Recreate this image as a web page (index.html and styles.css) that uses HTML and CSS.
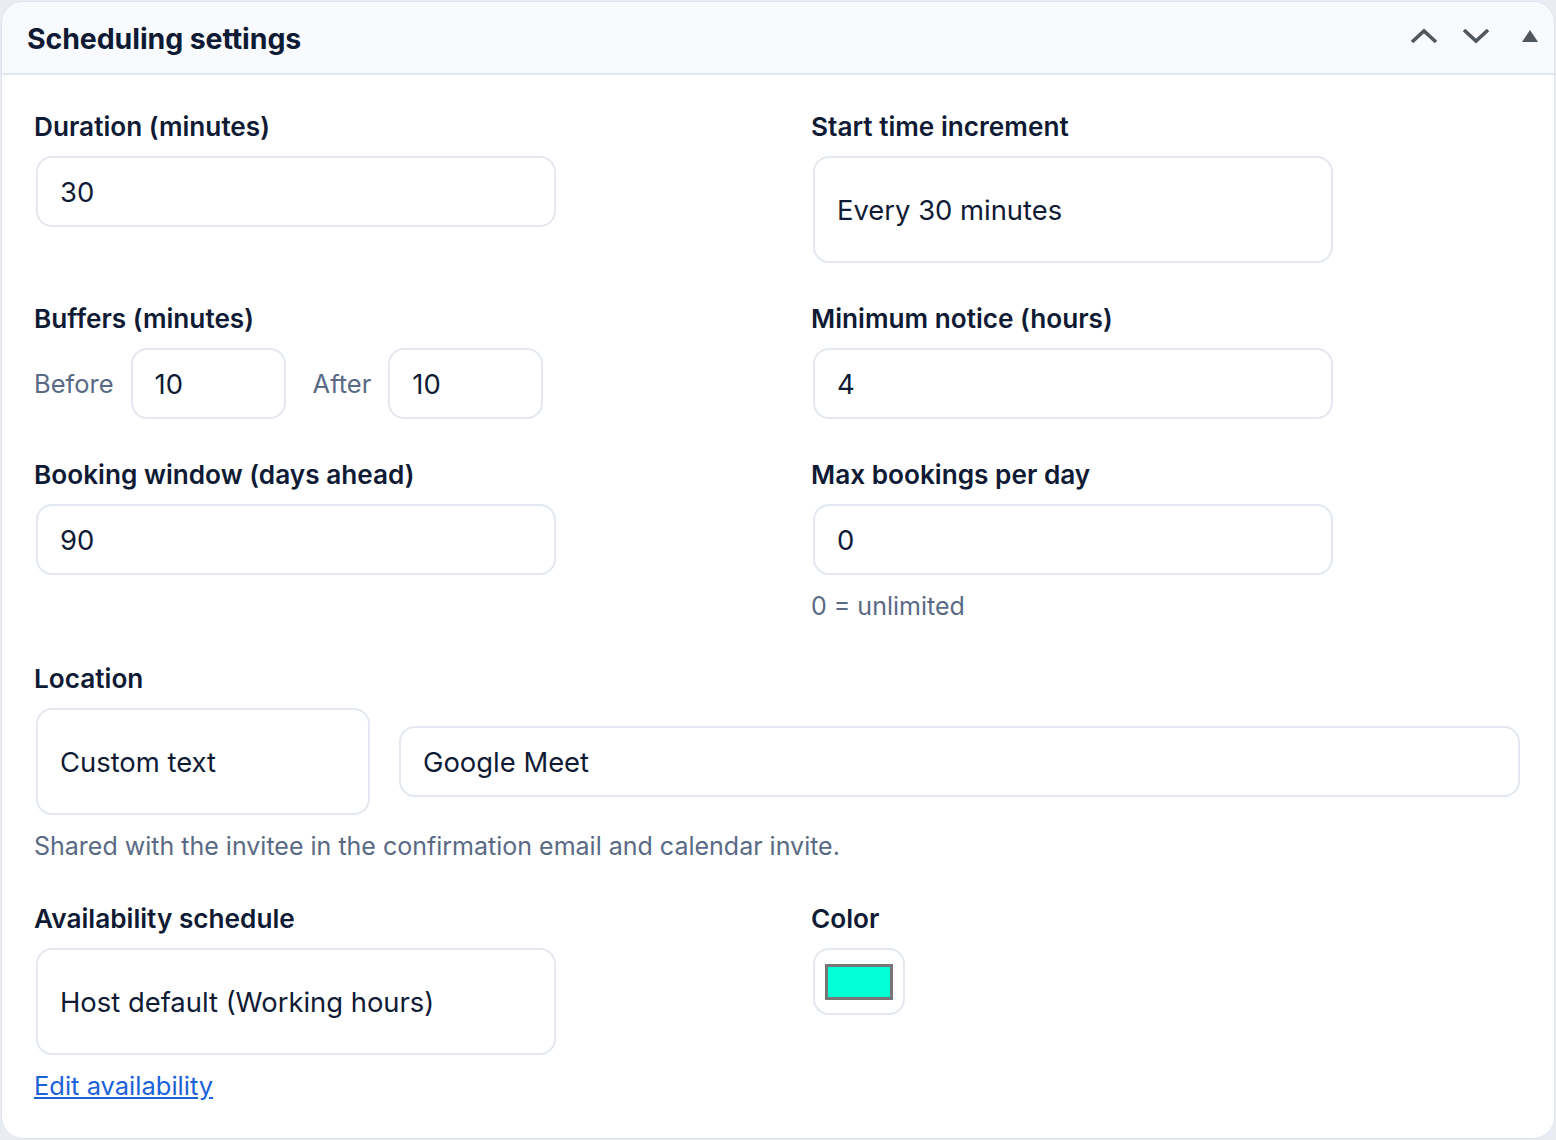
FILE: index.html
```html
<!DOCTYPE html>
<html lang="en">
<head>
    <meta charset="UTF-8">
    <meta name="viewport" content="width=device-width, initial-scale=1.0">
    <title>Scheduling settings</title>
    <link rel="stylesheet" href="styles.css">
</head>
<body>
<div class="postbox">
    <div class="postbox-header">
        <h2>Scheduling settings</h2>
        <div class="handle-actions">
            <button class="handle-btn" aria-label="Move up">
                <svg width="28" height="16" viewBox="0 0 28 16"><polyline points="2,14 14,3 26,14" fill="none" stroke="#50575e" stroke-width="3.6"/></svg>
            </button>
            <button class="handle-btn" aria-label="Move down">
                <svg width="28" height="16" viewBox="0 0 28 16"><polyline points="2,2 14,13 26,2" fill="none" stroke="#50575e" stroke-width="3.6"/></svg>
            </button>
            <button class="handle-btn" aria-label="Toggle panel">
                <svg width="16" height="12" viewBox="0 0 16 12"><polygon points="0,12 8,0 16,12" fill="#50575e"/></svg>
            </button>
        </div>
    </div>

    <div class="inside">
        <div class="settings-grid">
            <div class="field">
                <label>Duration (minutes)</label>
                <input class="text-input" type="text" value="30">
            </div>
            <div class="field">
                <label>Start time increment</label>
                <select class="select-input">
                    <option>Every 30 minutes</option>
                </select>
            </div>

            <div class="field">
                <label>Buffers (minutes)</label>
                <div class="buffer-row">
                    <span class="inline-label">Before</span>
                    <input class="text-input small" type="text" value="10">
                    <span class="inline-label after">After</span>
                    <input class="text-input small" type="text" value="10">
                </div>
            </div>
            <div class="field">
                <label>Minimum notice (hours)</label>
                <input class="text-input" type="text" value="4">
            </div>

            <div class="field">
                <label>Booking window (days ahead)</label>
                <input class="text-input" type="text" value="90">
            </div>
            <div class="field">
                <label>Max bookings per day</label>
                <input class="text-input" type="text" value="0">
                <p class="hint">0 = unlimited</p>
            </div>

            <div class="field full">
                <label>Location</label>
                <div class="location-row">
                    <select class="select-input location-type">
                        <option>Custom text</option>
                    </select>
                    <input class="text-input location-value" type="text" value="Google Meet">
                </div>
                <p class="hint">Shared with the invitee in the confirmation email and calendar invite.</p>
            </div>

            <div class="field">
                <label>Availability schedule</label>
                <select class="select-input">
                    <option>Host default (Working hours)</option>
                </select>
                <a class="edit-link" href="#">Edit availability</a>
            </div>
            <div class="field">
                <label>Color</label>
                <div class="color-box">
                    <span class="swatch"></span>
                </div>
            </div>
        </div>
    </div>
</div>
</body>
</html>
```

FILE: styles.css
```css
body {
    margin: 0;
    background-color: #e9ecf3;
    font-family: Inter, "Noto Sans", sans-serif;
    color: #0f1b35;
}

.postbox {
    margin: 1px;
    background: #ffffff;
    border: 1px solid #dfe4ee;
    border-radius: 22px;
    overflow: hidden;
}

.postbox-header {
    display: flex;
    align-items: center;
    justify-content: space-between;
    height: 71px;
    padding-left: 25px;
    background: #f8fafd;
    border-bottom: 2px solid #e3e8f0;
}

.postbox-header h2 {
    margin: 0 0 -2px 0;
    font-size: 28.5px;
    font-weight: 700;
    letter-spacing: -0.1px;
}

.handle-actions {
    display: flex;
    height: 100%;
}

.handle-btn {
    width: 52px;
    height: 100%;
    padding: 0;
    background: none;
    border: none;
    display: flex;
    align-items: center;
    justify-content: center;
    cursor: pointer;
}

.handle-btn svg {
    margin-top: -3px;
}

.handle-btn:last-child svg {
    margin-left: 3px;
}

.inside {
    padding: 34px 34px 36px 32px;
}

.settings-grid {
    display: grid;
    grid-template-columns: 1fr 1fr;
    column-gap: 68px;
    row-gap: 38px;
    align-items: start;
}

.field {
    display: flex;
    flex-direction: column;
    align-items: flex-start;
}

.field.full {
    grid-column: 1 / -1;
    align-items: stretch;
}

.field label {
    font-size: 26.2px;
    font-weight: 600;
    line-height: 35px;
    margin-bottom: 12px;
}

.text-input,
.select-input {
    box-sizing: border-box;
    width: 520px;
    margin-left: 2px;
    border: 2px solid #e2e7f0;
    border-radius: 16px;
    background: #fff;
    font-family: inherit;
    font-size: 27.4px;
    color: #0f1b35;
    outline: none;
}

.text-input {
    height: 71px;
    padding: 0 22px;
}

.select-input {
    height: 107px;
    padding: 0 22px;
    appearance: none;
    -webkit-appearance: none;
}

.buffer-row {
    display: flex;
    align-items: center;
    gap: 17px;
}

.inline-label {
    font-size: 25.5px;
    color: #5a6a85;
}

.inline-label.after {
    margin-left: 10px;
}

.text-input.small {
    width: 155px;
    margin-left: 0;
}

.hint {
    margin: 15px 0 0 0;
    font-size: 25px;
    line-height: 33px;
    color: #5a6a85;
}

.location-row {
    display: flex;
    align-items: center;
    gap: 29px;
}

.location-type {
    width: 334px;
}

.location-value {
    flex: 1;
    margin-left: 0;
}

.edit-link {
    margin-top: 15px;
    font-size: 25.5px;
    line-height: 32px;
    color: #1b62d8;
}

.color-box {
    box-sizing: border-box;
    width: 92px;
    height: 67px;
    margin-left: 2px;
    border: 2px solid #e2e7f0;
    border-radius: 16px;
    display: flex;
    align-items: center;
    justify-content: center;
}

.swatch {
    box-sizing: border-box;
    width: 68px;
    height: 36px;
    border: 3px solid #767676;
    background: #00ffd5;
}
```
